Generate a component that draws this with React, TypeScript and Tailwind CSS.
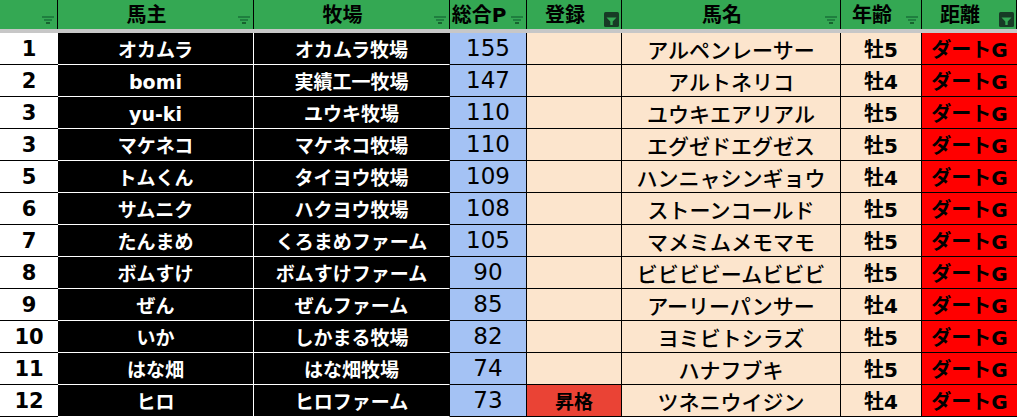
const FONT = { fontFamily: '"DejaVu Sans", "Noto Sans CJK JP", sans-serif' };
const CJK = { fontFamily: '"Noto Sans CJK JP", sans-serif' };

type Row = {
  rank: string;
  owner: string;
  farm: string;
  points: string;
  entry: string;
  horse: string;
  age: string;
  dist: string;
};

const rows: Row[] = [
  { rank: "1", owner: "オカムラ", farm: "オカムラ牧場", points: "155", entry: "", horse: "アルペンレーサー", age: "牡5", dist: "ダートG" },
  { rank: "2", owner: "bomi", farm: "実績工一牧場", points: "147", entry: "", horse: "アルトネリコ", age: "牡4", dist: "ダートG" },
  { rank: "3", owner: "yu-ki", farm: "ユウキ牧場", points: "110", entry: "", horse: "ユウキエアリアル", age: "牡5", dist: "ダートG" },
  { rank: "3", owner: "マケネコ", farm: "マケネコ牧場", points: "110", entry: "", horse: "エグゼドエグゼス", age: "牡5", dist: "ダートG" },
  { rank: "5", owner: "トムくん", farm: "タイヨウ牧場", points: "109", entry: "", horse: "ハンニャシンギョウ", age: "牡4", dist: "ダートG" },
  { rank: "6", owner: "サムニク", farm: "ハクヨウ牧場", points: "108", entry: "", horse: "ストーンコールド", age: "牡5", dist: "ダートG" },
  { rank: "7", owner: "たんまめ", farm: "くろまめファーム", points: "105", entry: "", horse: "マメミムメモマモ", age: "牡5", dist: "ダートG" },
  { rank: "8", owner: "ボムすけ", farm: "ボムすけファーム", points: "90", entry: "", horse: "ビビビビームビビビ", age: "牡5", dist: "ダートG" },
  { rank: "9", owner: "ぜん", farm: "ぜんファーム", points: "85", entry: "", horse: "アーリーパンサー", age: "牡4", dist: "ダートG" },
  { rank: "10", owner: "いか", farm: "しかまる牧場", points: "82", entry: "", horse: "ヨミビトシラズ", age: "牡5", dist: "ダートG" },
  { rank: "11", owner: "はな畑", farm: "はな畑牧場", points: "74", entry: "", horse: "ハナフブキ", age: "牡5", dist: "ダートG" },
  { rank: "12", owner: "ヒロ", farm: "ヒロファーム", points: "73", entry: "昇格", horse: "ツネニウイジン", age: "牡4", dist: "ダートG" },
];

function FilterIcon() {
  return (
    <svg width="12" height="8" viewBox="0 0 12 8" className="absolute right-[3px] top-[16px]">
      <rect x="0" y="0" width="12" height="2" fill="#1f7f3f" />
      <rect x="2" y="3" width="8" height="2" fill="#1f7f3f" />
      <rect x="4" y="6" width="4" height="2" fill="#17632f" />
    </svg>
  );
}

function ActiveFilterIcon() {
  return (
    <svg width="15" height="15" viewBox="0 0 15 15" className="absolute right-[2px] top-[12px]">
      <rect x="0" y="0" width="15" height="15" rx="1.5" fill="#173b25" />
      <path d="M2.5 5.5 H12.5 L8.7 9.5 V13 H6.3 V9.5 Z" fill="#34a853" />
    </svg>
  );
}

function Head({ label, active }: { label: string; active?: boolean }) {
  return (
    <div className="relative flex h-[29px] items-center justify-center border-r border-black bg-[#34a853] pr-[18px] text-[20px] font-bold leading-none text-black">
      <span>{label}</span>
      {active ? <ActiveFilterIcon /> : <FilterIcon />}
    </div>
  );
}

export default function App() {
  return (
    <div className="h-[417px] w-[1017px] overflow-hidden bg-white" style={FONT}>
      <div className="grid grid-cols-[58px_196px_196px_77px_95px_219px_81px_95px]">
        <Head label="" />
        <Head label="馬主" />
        <Head label="牧場" />
        <Head label="総合P" />
        <Head label="登録" active />
        <Head label="馬名" />
        <Head label="年齢" />
        <Head label="距離" active />
      </div>
      <div className="h-[4px] bg-[#c7c7c7]" />
      <div className="grid grid-cols-[58px_196px_196px_77px_95px_219px_81px_95px]">
        {rows.map((r, i) => (
          <div key={i} className="contents">
            <div className="flex h-[32px] items-end justify-center border-b border-black bg-white pb-[4px] text-[21px] font-bold leading-none text-black">
              {r.rank}
            </div>
            <div className="flex h-[32px] items-end justify-center border-b border-r border-white bg-black pb-[4px] text-[19px] font-bold leading-none text-white">
              {r.owner}
            </div>
            <div className="flex h-[32px] items-end justify-center border-b border-r border-b-white border-r-black bg-black pb-[4px] text-[19px] font-bold leading-none text-white">
              {r.farm}
            </div>
            <div className="flex h-[32px] items-end justify-center border-b border-r border-black bg-[#a4c2f4] pb-[4px] text-[23px] leading-none text-black">
              {r.points}
            </div>
            <div
              className={
                r.entry
                  ? "flex h-[32px] items-end justify-center border-b border-r border-black bg-[#ea4335] pb-[4px] text-[19px] font-bold leading-none text-black"
                  : "flex h-[32px] items-end justify-center border-b border-r border-black bg-[#fce5cd] pb-[4px] text-[19px] font-bold leading-none text-black"
              }
            >
              {r.entry}
            </div>
            <div
              className="flex h-[32px] items-end justify-center border-b border-r border-black bg-[#fce5cd] pb-[4px] text-[21px] font-medium leading-none text-black"
              style={CJK}
            >
              {r.horse}
            </div>
            <div className="flex h-[32px] items-end justify-center border-b border-r border-black bg-[#fce5cd] pb-[4px] text-[20px] font-bold leading-none text-black">
              {r.age}
            </div>
            <div className="flex h-[32px] items-end justify-center border-b border-black bg-[#ff0000] pb-[4px] text-[20px] font-bold leading-none text-black">
              {r.dist}
            </div>
          </div>
        ))}
      </div>
    </div>
  );
}
